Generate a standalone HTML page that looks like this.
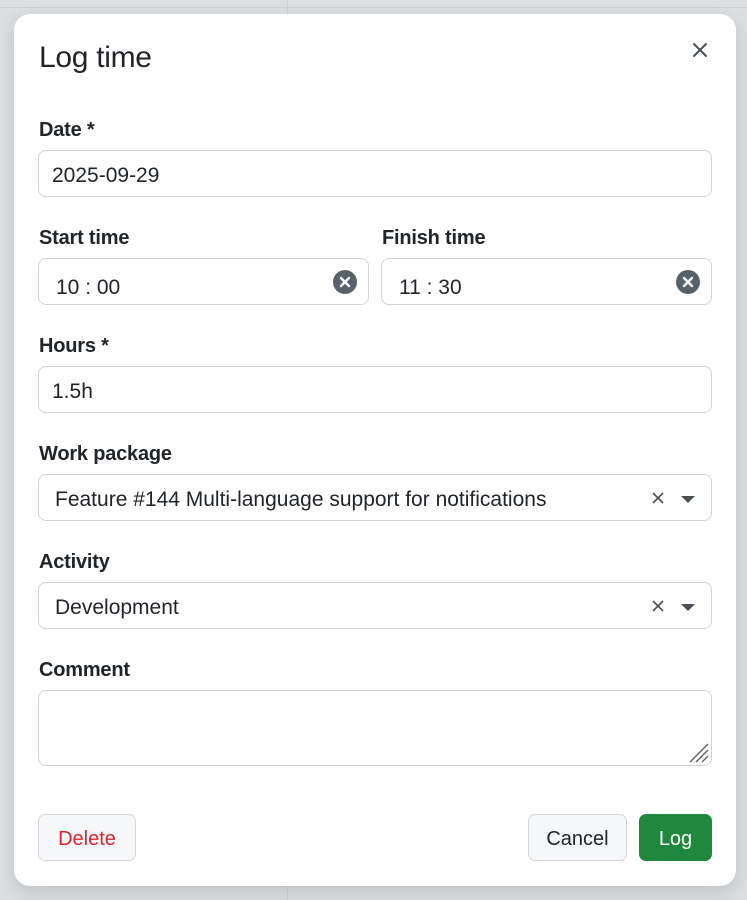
<!DOCTYPE html>
<html><head><meta charset="utf-8"><style>
*{box-sizing:border-box;margin:0;padding:0}
body{width:747px;height:900px;background:#dde0e3;font-family:"Liberation Sans",sans-serif;color:#212529;position:relative;overflow:hidden}
.bgl{position:absolute;background:#cfd3d7}
.modal{position:absolute;left:14px;top:14px;width:722px;height:872px;background:#fff;border-radius:16px;box-shadow:0 6px 20px rgba(0,0,0,.15)}
h1{position:absolute;left:25px;top:27px;font-size:30px;font-weight:normal;letter-spacing:-.3px}
.close{position:absolute;left:676px;top:26px;width:20px;height:20px}
.lbl{position:absolute;left:25px;font-size:20px;font-weight:bold;letter-spacing:-.2px;line-height:24px}
.inp{position:absolute;left:24px;width:674px;height:47px;border:1px solid #ced4da;border-radius:8px;font-size:21px;padding:2px 13px 0;line-height:45px}
.clr{position:absolute;right:11px;top:11px;width:24px;height:24px;border-radius:50%;background:#59626b;display:block}
.clr svg{display:block}
.sel-x{position:absolute;right:46px;top:16px}
.caret{position:absolute;right:16px;top:21px;width:0;height:0;border-left:7px solid transparent;border-right:7px solid transparent;border-top:7px solid #4a5057}
.btn{position:absolute;top:800px;height:47px;border-radius:7px;font-size:20px;line-height:49px;text-align:center}
</style></head><body>
<div class="bgl" style="left:287px;top:0;width:1px;height:900px"></div>
<div class="bgl" style="left:0;top:7px;width:747px;height:1px"></div>
<div class="modal">
<h1>Log time</h1>
<svg class="close" viewBox="0 0 20 20"><path d="M4 4L16 16M16 4L4 16" stroke="#4a5057" stroke-width="2" stroke-linecap="round"/></svg>

<div class="lbl" style="top:104px">Date *</div>
<div class="inp" style="top:136px">2025-09-29</div>

<div class="lbl" style="top:212px">Start time</div>
<div class="lbl" style="top:212px;left:368px">Finish time</div>
<div class="inp" style="top:244px;width:331px;padding:6px 17px 0">10 : 00<span class="clr"><svg width="24" height="24" viewBox="0 0 24 24"><path d="M8 8L16 16M16 8L8 16" stroke="#fff" stroke-width="2.4" stroke-linecap="round"/></svg></span></div>
<div class="inp" style="top:244px;left:367px;width:331px;padding:6px 17px 0">11 : 30<span class="clr"><svg width="24" height="24" viewBox="0 0 24 24"><path d="M8 8L16 16M16 8L8 16" stroke="#fff" stroke-width="2.4" stroke-linecap="round"/></svg></span></div>

<div class="lbl" style="top:320px">Hours *</div>
<div class="inp" style="top:352px">1.5h</div>

<div class="lbl" style="top:428px">Work package</div>
<div class="inp" style="top:460px;padding-left:16px">Feature #144 Multi-language support for notifications<svg class="sel-x" width="14" height="14" viewBox="0 0 14 14"><path d="M2 2L12 12M12 2L2 12" stroke="#4a5057" stroke-width="1.6"/></svg><span class="caret"></span></div>

<div class="lbl" style="top:536px">Activity</div>
<div class="inp" style="top:568px;padding-left:16px">Development<svg class="sel-x" width="14" height="14" viewBox="0 0 14 14"><path d="M2 2L12 12M12 2L2 12" stroke="#4a5057" stroke-width="1.6"/></svg><span class="caret"></span></div>

<div class="lbl" style="top:644px">Comment</div>
<div class="inp" style="top:676px;height:76px"><svg style="position:absolute;right:2px;bottom:2px" width="22" height="22" viewBox="0 0 22 22"><path d="M21 3L3 21M21 9L9 21M21 15L15 21" stroke="#666" stroke-width="1.5"/></svg></div>

<div class="btn" style="left:24px;width:98px;background:#f6f7f9;border:1px solid #d3d7dc;color:#dc2430">Delete</div>
<div class="btn" style="left:514px;width:99px;background:#f6f7f9;border:1px solid #d3d7dc">Cancel</div>
<div class="btn" style="left:625px;width:73px;background:#1f883d;color:#fff;border:1px solid #1f883d">Log</div>
</div>
</body></html>
